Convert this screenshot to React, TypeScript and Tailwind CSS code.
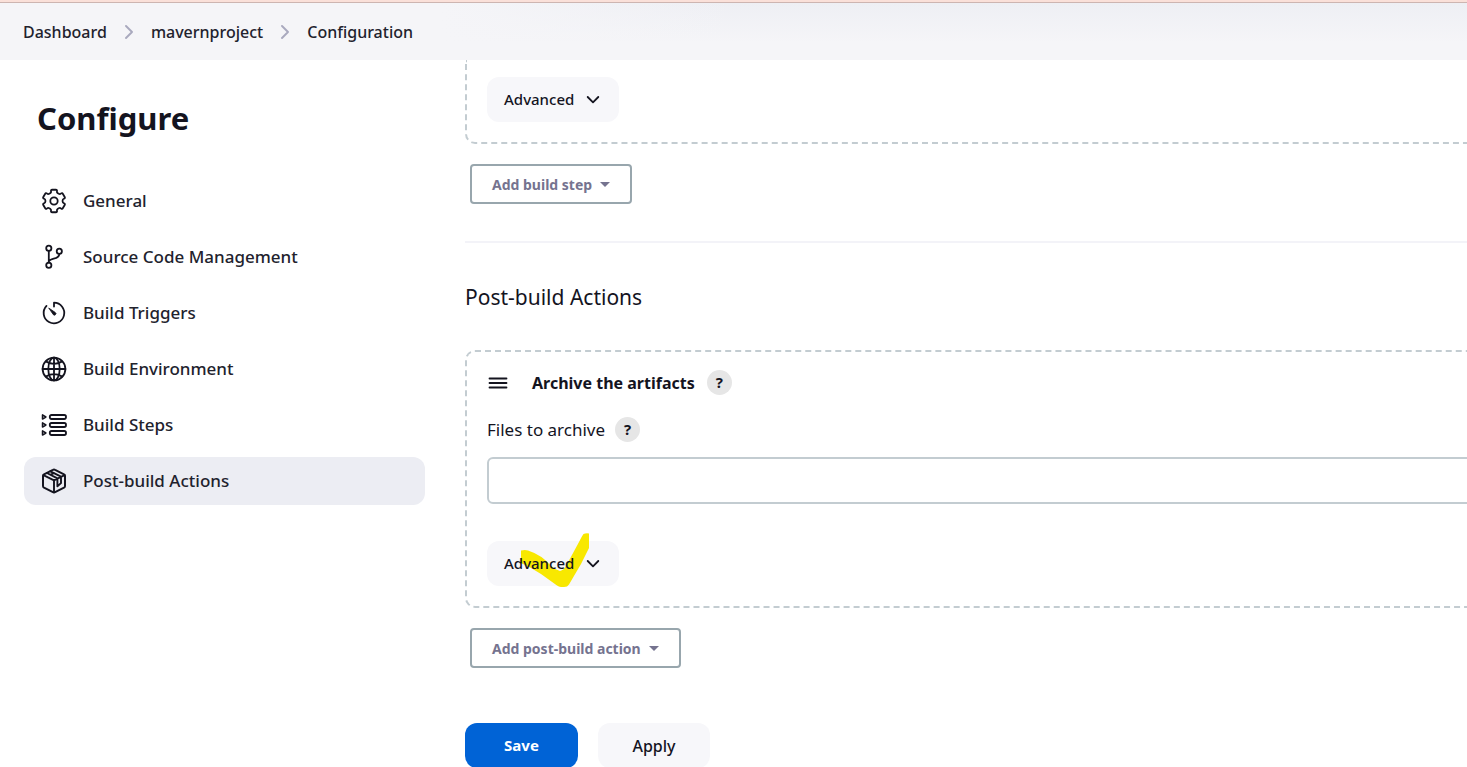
import type { ReactNode } from "react";

type Point = [number, number];

const polar = (radius: number, degrees: number): Point => {
  const a = ((degrees - 90) * Math.PI) / 180;
  return [12 + radius * Math.cos(a), 12 + radius * Math.sin(a)];
};

const toward = (from: Point, to: Point, distance: number): Point => {
  const length = Math.hypot(to[0] - from[0], to[1] - from[1]);
  const t = distance / length;
  return [from[0] + (to[0] - from[0]) * t, from[1] + (to[1] - from[1]) * t];
};

/** Six-toothed gear outline with rounded corners. */
const gearPath = (() => {
  const points: Point[] = [];
  for (let tooth = 0; tooth < 360; tooth += 60) {
    points.push(polar(8.8, tooth - 18), polar(11.7, tooth - 16), polar(11.7, tooth + 16), polar(8.8, tooth + 18));
  }
  const parts = points.map((p, i) => {
    const prev = points[(i + points.length - 1) % points.length];
    const next = points[(i + 1) % points.length];
    const a = toward(p, prev, 1.3);
    const b = toward(p, next, 1.3);
    return `${i === 0 ? "M" : "L"}${a.join(" ")}Q${p.join(" ")} ${b.join(" ")}`;
  });
  return parts.join("") + "Z";
})();

function Icon({ children }: { children: ReactNode }) {
  return (
    <svg
      viewBox="0 0 24 24"
      className="size-6 shrink-0 overflow-visible text-[#14141f]"
      fill="none"
      stroke="currentColor"
      strokeWidth="1.8"
      strokeLinecap="round"
      strokeLinejoin="round"
      aria-hidden="true"
    >
      {children}
    </svg>
  );
}

const sections = [
  {
    label: "General",
    icon: (
      <Icon>
        <path d={gearPath} />
        <circle cx="12" cy="12" r="3.7" />
      </Icon>
    ),
  },
  {
    label: "Source Code Management",
    icon: (
      <Icon>
        <circle cx="6.8" cy="3.2" r="2.6" />
        <circle cx="6.8" cy="20.2" r="2.6" />
        <circle cx="17.3" cy="6.3" r="2.6" />
        <path d="M6.8 5.8v11.8M17.3 8.9c0 6.2-9 3.4-10.5 7.6" />
      </Icon>
    ),
  },
  {
    label: "Build Triggers",
    icon: (
      <Icon>
        <path d="M12 5.6V1.7A10.3 10.3 0 1 1 4.5 4.9" />
        <path d="M7 7.2l6 4.1a1.5 1.5 0 1 1-2 2z" fill="currentColor" strokeWidth="0.8" />
      </Icon>
    ),
  },
  {
    label: "Build Environment",
    icon: (
      <Icon>
        <circle cx="12" cy="12" r="11.4" />
        <ellipse cx="12" cy="12" rx="5.7" ry="11.4" />
        <path d="M12 .6v22.8M.6 12h22.8M4.200 4.600c4.800 2.700 10.800 2.700 15.600 0M4.200 19.400c4.800-2.700 10.800-2.700 15.600 0" />
      </Icon>
    ),
  },
  {
    label: "Build Steps",
    icon: (
      <Icon>
        {[4, 12, 20].map((y) => (
          <g key={y}>
            <rect x="7.8" y={y - 2} width="16.2" height="4" rx="1.7" />
            <path d={`M.5 ${y - 2.1}v4.2l3.4-2.1z`} strokeWidth="1.5" />
          </g>
        ))}
      </Icon>
    ),
  },
  {
    label: "Post-build Actions",
    icon: (
      <Icon>
        <path
          d="M10.9 .9a2.3 2.3 0 0 1 2.2 0l8.9 4.500a1.900 1.900 0 0 1 1 1.700v9.800a1.900 1.900 0 0 1-1 1.700l-8.900 4.500a2.300 2.300 0 0 1-2.200 0L2 18.600a1.900 1.900 0 0 1-1-1.700V7.100a1.900 1.900 0 0 1 1-1.700z"
          strokeWidth="2"
        />
        <path d="M1.4 6.2L12 11.3l10.600-5.100M12 11.300v12M5 4l10.400 5.300v8l3.600-3.200V7.700L8.400 2.300M8.600 5.700L12 4.100" strokeWidth="1.9" />
      </Icon>
    ),
    active: true,
  },
];

function Chevron({ className }: { className: string }) {
  return (
    <svg viewBox="0 0 14 14" className={className} fill="none" stroke="currentColor" strokeWidth="1.8" strokeLinecap="round" strokeLinejoin="round" aria-hidden="true">
      <path d="M1.7 4L7 9.3 12.3 4" />
    </svg>
  );
}

function Separator() {
  return (
    <svg viewBox="0 0 8 14" className="mx-[18px] h-3.5 w-2" fill="none" stroke="#a9a9be" strokeWidth="1.9" strokeLinecap="round" strokeLinejoin="round" aria-hidden="true">
      <path d="M1 1l6 6-6 6" />
    </svg>
  );
}

function AdvancedButton({ children }: { children?: ReactNode }) {
  return (
    <button type="button" className="relative flex h-[45px] w-[132px] items-center gap-3 rounded-xl bg-[#f7f7fa] pl-[17px] text-[15px] font-medium">
      {children}
      <span className="relative">Advanced</span>
      <Chevron className="relative size-3.5" />
    </button>
  );
}

function MenuButton({ children }: { children: ReactNode }) {
  return (
    <button type="button" className="ml-[5px] flex h-10 items-center gap-2 rounded border-2 border-[#98a6ad] px-5 text-[14px] font-bold text-[#75738f]">
      {children}
      <svg viewBox="0 0 10 5" className="h-[5px] w-2.5" fill="currentColor" aria-hidden="true">
        <path d="M0 0h10L5 5z" />
      </svg>
    </button>
  );
}

function HelpButton({ label }: { label: string }) {
  return (
    <button type="button" aria-label={`Help for ${label}`} className="flex size-[25px] items-center justify-center rounded-full bg-[#e6e6e6] text-[15px] font-bold">
      ?
    </button>
  );
}

export default function App() {
  return (
    <div className="flex h-screen flex-col overflow-hidden bg-white font-['Noto_Sans',sans-serif] text-[#14141f]">
      <header className="shrink-0 border-t-2 border-[#fae0d9]">
        <nav
          aria-label="Breadcrumb"
          className="flex h-[58px] items-center border-t border-[#cdb5b1] bg-[linear-gradient(to_right,#f5f5f8_30%,transparent_50%),linear-gradient(to_bottom,#eeeff4,#f5f5f8_70%)] px-[23px] text-[16px] font-medium text-[#22222d]"
        >
          <a href="#dashboard">Dashboard</a>
          <Separator />
          <a href="#project">mavernproject</a>
          <Separator />
          <a href="#configuration">Configuration</a>
        </nav>
      </header>

      <div className="flex min-h-0 flex-1">
        <aside className="w-[449px] shrink-0 px-6 pt-[35px]">
          <h1 className="pl-[13px] text-[31px] leading-[46px] font-bold">Configure</h1>
          <nav aria-label="Sections" className="mt-9 flex flex-col gap-2">
            {sections.map((s) => (
              <a
                key={s.label}
                href="#section"
                className={
                  s.active
                    ? "flex h-12 items-center gap-[17px] rounded-xl bg-[#ecedf3] pl-[18px] text-[17px] font-medium text-[#22222d]"
                    : "flex h-12 items-center gap-[17px] rounded-xl pl-[18px] text-[17px] font-medium text-[#22222d]"
                }
              >
                {s.icon}
                {s.label}
              </a>
            ))}
          </nav>
        </aside>

        <main className="min-w-0 flex-1 overflow-hidden pl-4">
          <section className="-mr-12 rounded-b-[10px] border-2 border-t-0 border-dashed border-[#c3ccd1] px-5 pt-[17px] pb-5">
            <AdvancedButton />
          </section>
          <div className="mt-5">
            <MenuButton>Add build step</MenuButton>
          </div>
          <hr className="mt-[37px] border-t-2 border-[#f3f3f8]" />

          <h2 className="mt-9 text-[21px] leading-9">Post-build Actions</h2>

          <section className="mt-[35px] -mr-12 rounded-[10px] border-2 border-dashed border-[#c3ccd1] px-5 pt-[18px] pb-5">
            <div className="flex h-[25px] items-center">
              <svg viewBox="0 0 20 12" className="mr-6 ml-px h-3 w-5" fill="none" stroke="currentColor" strokeWidth="1.8" strokeLinecap="round" aria-hidden="true">
                <path d="M1.5 1.5h17M1.5 6h17M1.5 10.5h17" />
              </svg>
              <h3 className="mr-3 text-[16px] font-bold">Archive the artifacts</h3>
              <HelpButton label="Archive the artifacts" />
            </div>
            <div className="mt-[22px] flex h-[25px] items-center gap-2.5">
              <label htmlFor="files" className="text-[17px]">Files to archive</label>
              <HelpButton label="Files to archive" />
            </div>
            <input id="files" type="text" className="mt-[15px] block h-[47px] w-full rounded-md border-2 border-[#c3ccd1] px-3 text-[16px] outline-none" />
            <div className="mt-[37px]">
              <AdvancedButton>
                <svg viewBox="0 0 68 54" className="absolute -top-2 left-[34px] h-[54px] w-[68px]" fill="#f8e800" aria-hidden="true">
                  <path d="M0 17.5Q4 16.5 7 17.5Q21 22 30 33Q34 36.5 39 38Q43 37 45 33L58 9Q61 3 62.5 1Q65 0 68 .5V15L60 31L48 51.5Q46.5 54 43 54Q39 54.5 36 52.5L20 41Q11 35 0 30Z" />
                </svg>
              </AdvancedButton>
            </div>
          </section>
          <div className="mt-5">
            <MenuButton>Add post-build action</MenuButton>
          </div>

          <div className="mt-[55px] flex gap-5">
            <button type="button" className="h-[45px] w-[113px] rounded-xl bg-[#0063d6] text-[15px] font-bold text-white">Save</button>
            <button type="button" className="h-[45px] w-28 rounded-xl bg-[#f7f7fa] text-[16px] font-medium">Apply</button>
          </div>
        </main>
      </div>
    </div>
  );
}
